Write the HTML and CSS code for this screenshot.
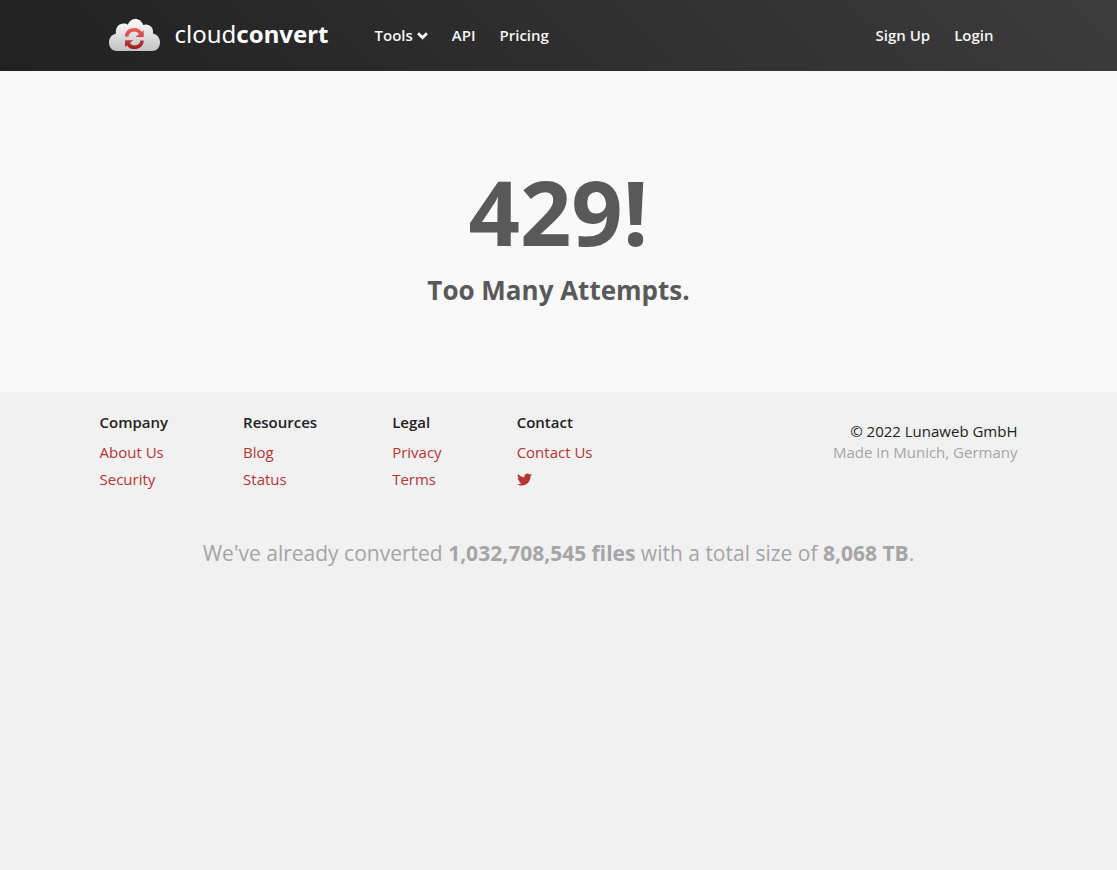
FILE: index.html
```html
<!DOCTYPE html>
<html lang="en">
<head>
<meta charset="utf-8">
<meta name="viewport" content="width=device-width, initial-scale=1">
<title>429 - CloudConvert</title>
<link rel="stylesheet" href="styles.css">
</head>
<body>
<header class="navbar">
  <div class="navbar-inner">
    <a class="brand" href="#">
      <svg class="brand-cloud" viewBox="0 0 52 32" aria-hidden="true">
        <defs>
          <linearGradient id="cloud" x1="0" y1="0" x2="0" y2="1"><stop offset="0" stop-color="#fdfdfd"/><stop offset="1" stop-color="#c2c2c2"/></linearGradient>
          <linearGradient id="arrows" gradientUnits="userSpaceOnUse" x1="0" y1="9" x2="0" y2="29"><stop offset="0" stop-color="#f0625c"/><stop offset="1" stop-color="#a01f22"/></linearGradient>
        </defs>
        <path fill="url(#cloud)" d="M8 32C3.500 32 0 28.500 0 23.500C0 18.500 3 15.500 7 14.500C6 8.500 10 4.500 14.500 4.500C16.300 4.500 17.800 5 18.800 5.800C20 2 23 0 26.500 0C30 0 33 2.200 34.200 6C39.500 4 45 8 44 14.500C48.500 15.500 51 19 51 23.500C51 28.500 47.500 32 43 32Z"/>
        <g fill="none" stroke="url(#arrows)" stroke-width="3.600">
          <path d="M17.600 17.500C18.500 9.500 28.500 8.800 31.800 14.500"/>
          <path d="M33.200 21.500C32.300 29.500 22.300 30.200 19 24.500"/>
        </g>
        <path fill="url(#arrows)" d="M34.700 11.200V18H26.500ZM16 28V21.200H24.200Z"/>
      </svg>
      <span class="brand-name">cloud<b>convert</b></span>
    </a>
    <nav class="nav nav-main" aria-label="Main">
      <button class="nav-item" type="button">Tools<svg class="chevron" viewBox="0 0 10 10" aria-hidden="true"><path d="M1 3L5 7L9 3" fill="none" stroke="currentColor" stroke-width="2.600"/></svg></button>
      <a class="nav-item" href="#">API</a>
      <a class="nav-item" href="#">Pricing</a>
    </nav>
    <nav class="nav nav-account" aria-label="Account">
      <a class="nav-item" href="#">Sign Up</a>
      <a class="nav-item" href="#">Login</a>
    </nav>
  </div>
</header>
<main class="error">
  <h1 class="error-code">429!</h1>
  <h2 class="error-text">Too Many Attempts.</h2>
</main>
<footer class="footer">
  <div class="footer-top">
    <div class="link-groups">
      <section class="link-group"><h3>Company</h3><a href="#">About Us</a><a href="#">Security</a></section>
      <section class="link-group"><h3>Resources</h3><a href="#">Blog</a><a href="#">Status</a></section>
      <section class="link-group"><h3>Legal</h3><a href="#">Privacy</a><a href="#">Terms</a></section>
      <section class="link-group"><h3>Contact</h3><a href="#">Contact Us</a><a class="twitter" href="#" aria-label="Twitter"><svg viewBox="0 0 512 512" aria-hidden="true"><path fill="currentColor" d="M459.370 151.716c.325 4.548.325 9.097.325 13.645 0 138.720-105.583 298.558-298.558 298.558-59.452 0-114.680-17.219-161.137-47.106 8.447.974 16.568 1.299 25.340 1.299 49.055 0 94.213-16.568 130.274-44.832-46.132-.975-84.792-31.188-98.112-72.772 6.498.974 12.995 1.624 19.818 1.624 9.421 0 18.843-1.300 27.614-3.573-48.081-9.747-84.143-51.980-84.143-102.985v-1.299c13.969 7.797 30.214 12.670 47.431 13.319-28.264-18.843-46.781-51.005-46.781-87.391 0-19.492 5.197-37.360 14.294-52.954 51.655 63.675 129.300 105.258 216.365 109.807-1.624-7.797-2.599-15.918-2.599-24.040 0-57.828 46.782-104.934 104.934-104.934 30.213 0 57.502 12.670 76.670 33.137 23.715-4.548 46.456-13.320 66.599-25.340-7.798 24.366-24.366 44.833-46.132 57.827 21.117-2.273 41.584-8.122 60.426-16.243-14.292 20.791-32.161 39.308-52.628 54.253z"/></svg></a></section>
    </div>
    <p class="legal">© 2022 Lunaweb GmbH<br><span>Made in Munich, Germany</span></p>
  </div>
  <p class="stats">We've already converted <b>1,032,708,545 files</b> with a total size of <b>8,068 TB</b>.</p>
</footer>
</body>
</html>
```
FILE: styles.css
```css
* { box-sizing: border-box; }
body {
  margin: 0;
  background: #f1f1f1;
  color: #212121;
  font: 400 15px/21px "Open Sans", "Noto Sans", sans-serif;
}
h1, h2, h3, p { margin: 0; }
a { color: #b53535; text-decoration: none; }

.navbar { background: linear-gradient(45deg, #212121, #3c3c3c); }
.navbar-inner {
  display: flex;
  align-items: center;
  max-width: 920px;
  min-height: 71px;
  margin: 0 auto;
  padding: 0 25px 0 10px;
}
.brand { display: flex; align-items: center; gap: 14px; padding-bottom: 2px; color: #fff; }
.brand-cloud { width: 52px; height: 32px; }
.brand-name { padding-bottom: 2px; font: 400 24px/32px "Noto Sans", sans-serif; }
.brand-name b { font-weight: 700; }
.nav { display: flex; gap: 24px; }
.nav-main { margin-left: 46px; }
.nav-account { margin-left: auto; }
.nav-item {
  display: flex;
  align-items: center;
  gap: 4px;
  padding: 0;
  border: 0;
  background: none;
  color: #f5f5f5;
  font: 600 15px/21px "Open Sans", "Noto Sans", sans-serif;
}
.chevron { width: 11px; height: 11px; }

.error {
  padding: 79px 20px 84px;
  background: #f9f9f9;
  color: #595959;
  text-align: center;
}
.error-code { font-size: 90px; line-height: 122px; font-weight: 700; }
.error-text { font-size: 26px; line-height: 36px; font-weight: 700; }

.footer { padding: 20px; }
.footer-top {
  display: flex;
  justify-content: space-between;
  max-width: 918px;
  margin: 0 auto;
}
.link-groups { display: flex; gap: 75px; }
.link-group { display: flex; flex-direction: column; }
.link-group h3 { margin-bottom: 6px; font-size: 15px; line-height: 21px; font-weight: 600; }
.link-group a { line-height: 27px; }
.link-group .twitter { display: flex; align-items: center; height: 27px; }
.twitter svg { width: 15px; height: 15px; }
.legal { padding-top: 9px; text-align: right; }
.legal span { color: #a5a5a5; }
.stats { padding-top: 44px; color: #a5a5a5; font-size: 21px; line-height: 32px; text-align: center; }
.stats b { font-weight: 700; }
```
